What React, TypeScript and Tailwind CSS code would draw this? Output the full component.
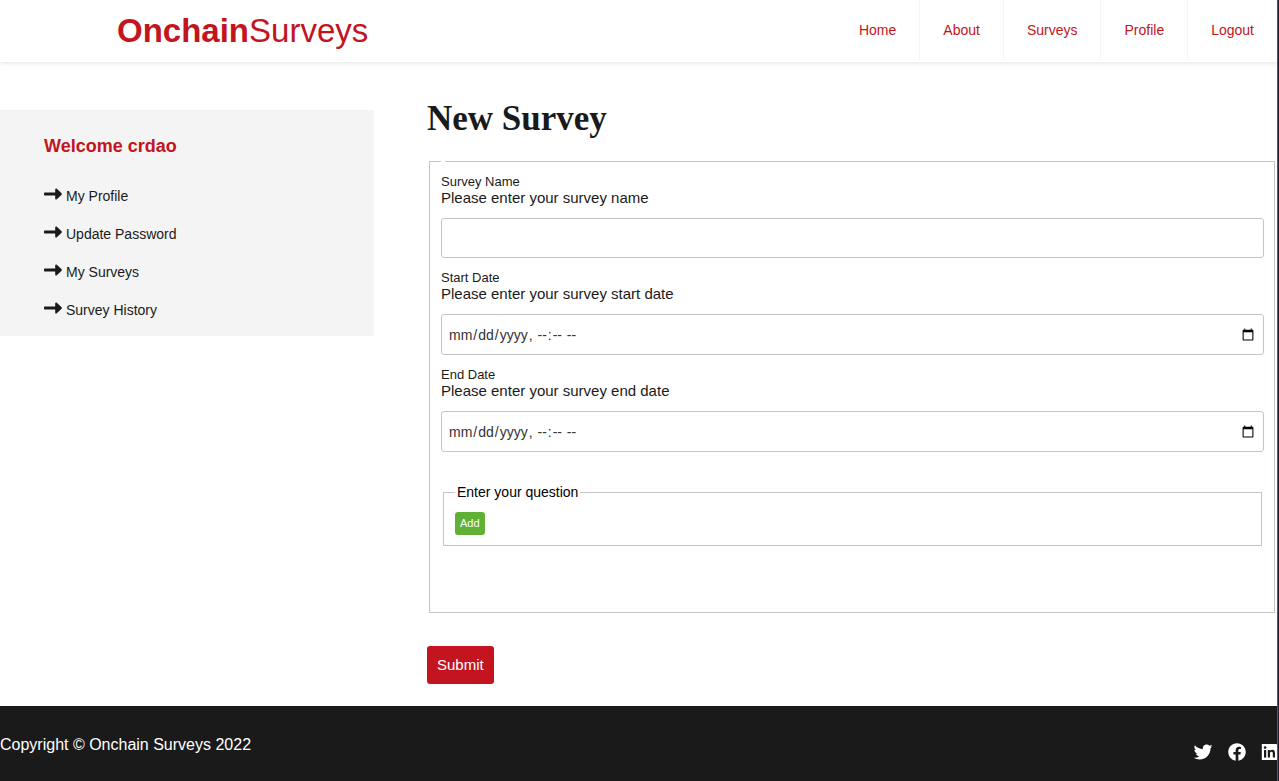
import React from "react";
import { IoLogoFacebook, IoLogoTwitter } from "react-icons/io5";

const navLinks = ["Home", "About", "Surveys", "Profile", "Logout"];

const sideLinks = ["My Profile", "Update Password", "My Surveys", "Survey History"];

interface FieldProps {
  id: string;
  label: string;
  hint: string;
  type: "text" | "datetime-local";
}

function Field({ id, label, hint, type }: FieldProps) {
  return (
    <div className="flex flex-col">
      <label htmlFor={id} className="text-[13px] leading-4">
        {label}
      </label>
      <p id={`${id}-hint`} className="text-[15px] leading-4">
        {hint}
      </p>
      <input
        id={id}
        type={type}
        aria-describedby={`${id}-hint`}
        className={
          type === "text"
            ? "mt-3 h-10 w-full rounded-[3px] border border-[#c5c5c5] bg-white px-1.5 text-sm"
            : "mt-3 h-[41px] w-full rounded-[3px] border border-[#c5c5c5] bg-white px-1.5 text-sm text-[#333]"
        }
      />
    </div>
  );
}

function ArrowIcon() {
  return (
    <svg
      viewBox="0 0 18 12"
      className="mb-1 h-3 w-[18px] shrink-0"
      fill="currentColor"
      aria-hidden="true"
    >
      <rect x="0" y="4.4" width="13" height="3.2" rx="0.8" />
      <path d="M11.2 1.3c0-.9 1-1.2 1.6-.6l4.8 4.6c.4.4.4 1 0 1.4l-4.8 4.6c-.6.6-1.6.3-1.6-.6z" />
    </svg>
  );
}

function LinkedinIcon() {
  return (
    <svg viewBox="0 0 16 16" className="size-4" aria-hidden="true">
      <rect x="0.8" width="15.2" height="16" rx="0.4" fill="#fff" />
      <g fill="#1a1a1a">
        <circle cx="4.1" cy="3.6" r="1.3" />
        <rect x="3" y="6" width="2.2" height="7.6" />
        <path d="M6.8 6h2.1v1c.5-.8 1.300-1.200 2.300-1.200 2.200 0 2.800 1.400 2.800 3.500v4.300h-2.200V9.700c0-1-.2-1.900-1.300-1.900-1.200 0-1.500.9-1.500 1.900v3.900H6.800z" />
      </g>
    </svg>
  );
}

function Header() {
  return (
    <header className="flex h-[62px] items-start justify-between bg-white shadow-[0_1px_5px_rgba(0,0,0,0.12)]">
      <a href="#" className="ml-[117px] text-[33px] leading-[62px] text-[#c31420]">
        <b className="font-bold">Onchain</b>Surveys
      </a>
      <nav>
        <ul className="flex">
          {navLinks.map((name) => (
            <li key={name} className="border-r border-[#f4f4f4] last:border-r-0">
              <a
                href="#"
                className="block px-[23px] text-sm leading-[60px] text-[#c31420]"
              >
                {name}
              </a>
            </li>
          ))}
        </ul>
      </nav>
    </header>
  );
}

function Sidebar() {
  return (
    <aside className="mt-12 w-[374px] shrink-0 self-start bg-[#f4f4f4] px-11 pt-6 pb-[7px]">
      <h2 className="text-lg leading-6 font-bold text-[#c31420]">Welcome crdao</h2>
      <ul className="mt-[19px]">
        {sideLinks.map((name) => (
          <li key={name}>
            <a href="#" className="flex h-[38px] items-center gap-1 text-sm">
              <ArrowIcon />
              {name}
            </a>
          </li>
        ))}
      </ul>
    </aside>
  );
}

function SurveyForm() {
  return (
    <main className="min-w-0 flex-1 pt-[37px] pb-[22px]">
      <h1 className="font-['Liberation_Serif',serif] text-[35px] leading-10 font-bold">
        New Survey
      </h1>
      <form>
        <fieldset className="mx-0.5 mt-[22px] border border-[#c5c5c5] pt-3 pr-2.5 pb-[66px] pl-[11px]">
          <legend className="h-px px-0.5" />
          <div className="flex flex-col gap-3">
            <Field
              id="survey-name"
              label="Survey Name"
              hint="Please enter your survey name"
              type="text"
            />
            <Field
              id="start-date"
              label="Start Date"
              hint="Please enter your survey start date"
              type="datetime-local"
            />
            <Field
              id="end-date"
              label="End Date"
              hint="Please enter your survey end date"
              type="datetime-local"
            />
          </div>
          <fieldset className="mx-0.5 mt-8 border border-[#c5c5c5] px-[11px] pt-3 pb-2.5">
            <legend className="px-0.5 text-sm leading-4 text-black">
              Enter your question
            </legend>
            <button
              type="button"
              className="block h-[23px] rounded-[3px] bg-[#5fb034] px-[5px] text-[11px] text-white"
            >
              Add
            </button>
          </fieldset>
        </fieldset>
        <button
          type="submit"
          className="mt-[33px] block h-[38px] rounded-[3px] bg-[#c31420] px-2.5 text-[15px] text-white"
        >
          Submit
        </button>
      </form>
    </main>
  );
}

function Footer() {
  return (
    <footer className="flex flex-1 items-start justify-between bg-[#1a1a1a] pt-[26px] pb-5 text-white">
      <p className="text-base leading-[26px]">Copyright © Onchain Surveys 2022</p>
      <div className="mt-2.5 flex items-center gap-3.5">
        <a href="#" aria-label="Twitter">
          <IoLogoTwitter className="size-5" />
        </a>
        <a href="#" aria-label="Facebook">
          <IoLogoFacebook className="size-5" />
        </a>
        <a href="#" aria-label="LinkedIn">
          <LinkedinIcon />
        </a>
      </div>
    </footer>
  );
}

export default function App() {
  return (
    <div className="border-r border-[#20222c] font-['Liberation_Sans',sans-serif] text-[#1a1a1a]">
      <div className="flex min-h-screen flex-col border-r border-[#55585e] bg-white">
        <Header />
        <div className="flex gap-[53px]">
          <Sidebar />
          <SurveyForm />
        </div>
        <Footer />
      </div>
    </div>
  );
}
